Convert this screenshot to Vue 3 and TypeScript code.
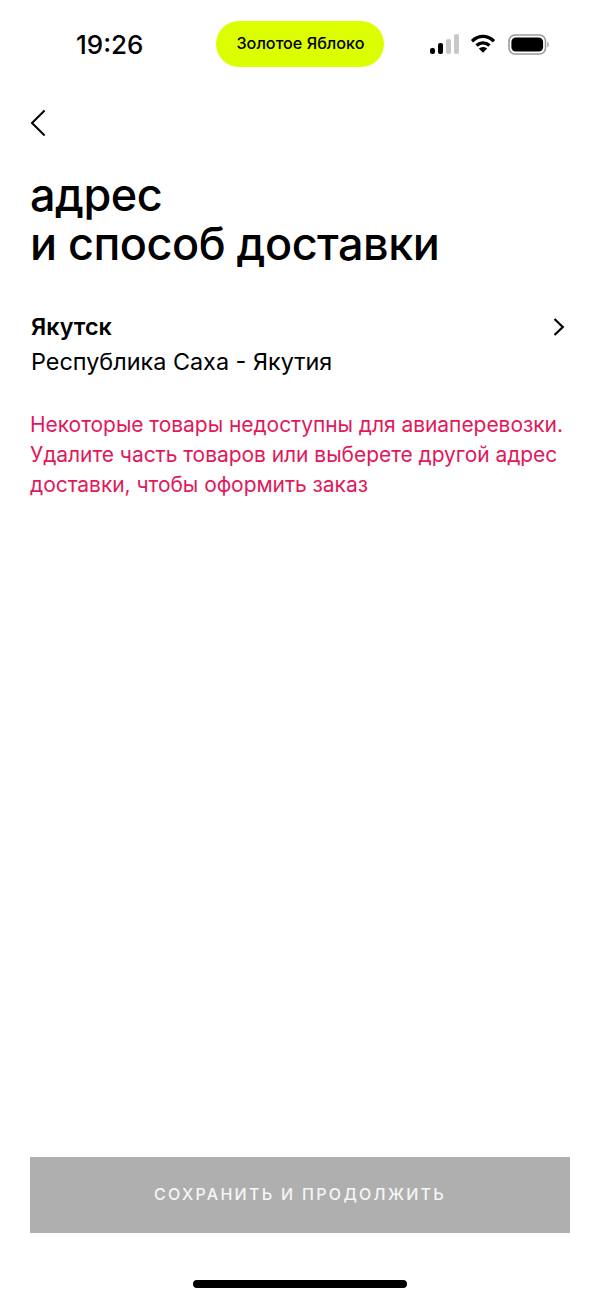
<script setup lang="ts">
const bars: { h: number; c: string }[] = [
  { h: 6, c: '#000' },
  { h: 11, c: '#000' },
  { h: 15, c: '#c8c8c8' },
  { h: 20, c: '#c8c8c8' }
]
</script>

<template>
  <div class="screen">
    <header class="status">
      <span class="time">19:26</span>
      <span class="pill">Золотое Яблоко</span>
      <div class="sys">
        <div class="signal">
          <i v-for="(b, i) in bars" :key="i" :style="{ height: b.h + 'px', background: b.c }"></i>
        </div>
        <svg class="wifi" width="26" height="20" viewBox="0 0 26 20">
          <path d="M2 7.2C9 1 17 1 24 7.2" fill="none" stroke="#000" stroke-width="3.4" />
          <path d="M6.5 11.6C10.5 8 15.5 8 19.5 11.6" fill="none" stroke="#000" stroke-width="3.4" />
          <path d="M8.8 14.4 13 18.8 17.2 14.4C14.6 12.4 11.4 12.4 8.8 14.4Z" fill="#000" />
        </svg>
        <svg class="battery" width="42" height="21" viewBox="0 0 42 21">
          <rect x="1" y="1" width="36.5" height="19" rx="6" fill="none" stroke="#9a9a9a" stroke-width="1.6" />
          <rect x="3.4" y="3.4" width="31.7" height="14.2" rx="4.4" fill="#000" />
          <path d="M39.4 7.5C41.2 8.2 41.2 12.8 39.4 13.5Z" fill="#9a9a9a" />
        </svg>
      </div>
    </header>

    <button class="back" aria-label="Назад">
      <svg width="18" height="28" viewBox="0 0 18 28">
        <path d="M15.6 1.5 3 14 15.6 26.5" fill="none" stroke="#000" stroke-width="2" />
      </svg>
    </button>

    <h1 class="title">адрес<br />и способ доставки</h1>

    <section class="address">
      <div class="address-text">
        <div class="city">Якутск</div>
        <div class="region">Республика Саха - Якутия</div>
      </div>
      <svg class="chevron" width="14" height="20" viewBox="0 0 14 20">
        <path d="M2.5 2 10.8 10 2.5 18" fill="none" stroke="#000" stroke-width="2.2" />
      </svg>
    </section>

    <p class="warning">Некоторые товары недоступны для авиаперевозки.<br />Удалите часть товаров или выберете другой адрес<br />доставки, чтобы оформить заказ</p>

    <div class="spacer"></div>

    <button class="save">СОХРАНИТЬ И ПРОДОЛЖИТЬ</button>

    <div class="home-wrap"><div class="home"></div></div>
  </div>
</template>

<style>
html, body { margin: 0; padding: 0; background: #fff; }
</style>

<style scoped>
.screen {
  width: 600px;
  height: 1300px;
  box-sizing: border-box;
  display: flex;
  flex-direction: column;
  background: #fff;
  color: #000;
  font-family: Inter, "Liberation Sans", sans-serif;
  overflow: hidden;
}
.status {
  display: flex;
  align-items: center;
  height: 46px;
  margin-top: 21px;
  padding-left: 76px;
  flex: none;
}
.time {
  width: 140px;
  font-size: 26px;
  font-weight: 500;
  line-height: 47px;
}
.pill {
  width: 168px;
  height: 46px;
  flex: none;
  border-radius: 23px;
  background: #dcff00;
  font-size: 16.2px;
  font-weight: 500;
  line-height: 44px;
  text-align: center;
  padding-left: 1px;
  box-sizing: border-box;
}
.sys {
  display: flex;
  align-items: center;
  margin-left: 46px;
  height: 24px;
}
.signal {
  display: flex;
  align-items: flex-end;
  gap: 3px;
  height: 20px;
}
.signal i {
  display: block;
  width: 5px;
  border-radius: 2px;
}
.wifi { margin-left: 11px; }
.battery { margin-left: 12px; }
.back {
  display: block;
  align-self: flex-start;
  margin: 42px 0 0 29px;
  padding: 0;
  border: 0;
  background: none;
  height: 28px;
}
.back svg { display: block; }
.title {
  margin: 33px 0 0 30px;
  font-size: 45px;
  line-height: 49px;
  font-weight: 550;
  letter-spacing: -0.5px;
}
.address {
  display: flex;
  justify-content: space-between;
  margin: 40.5px 34px 0 31px;
}
.city {
  font-size: 23.4px;
  line-height: 35px;
  font-weight: 600;
}
.region {
  font-size: 23.4px;
  line-height: 35px;
  font-weight: 400;
}
.chevron { margin: 8px 0 0; }
.warning {
  margin: 31px 0 0 30px;
  color: #e0195b;
  font-size: 21px;
  letter-spacing: -0.05px;
  line-height: 30px;
  white-space: nowrap;
}
.spacer { flex: 1; }
.save {
  flex: none;
  margin: 0 30px;
  height: 76px;
  padding: 0 0 2px;
  border: 0;
  background: #afafaf;
  color: #f6f6f6;
  font-family: inherit;
  font-size: 16px;
  font-weight: 500;
  letter-spacing: 2.3px;
}
.home-wrap {
  flex: none;
  height: 67px;
  display: flex;
  justify-content: center;
  padding-top: 47px;
  box-sizing: border-box;
}
.home {
  width: 214px;
  height: 8px;
  border-radius: 4px;
  background: #000;
}
</style>
